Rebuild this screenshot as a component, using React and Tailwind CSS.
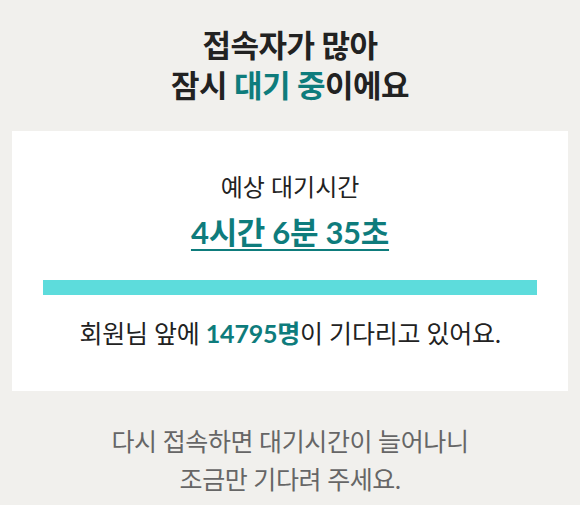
const font = { fontFamily: "Lato, 'Noto Sans CJK KR', sans-serif" };

export default function App() {
  return (
    <main
      className="w-[580px] h-[505px] bg-[#f1f0ed] flex flex-col items-center text-[#222]"
      style={font}
    >
      <h1 className="mt-[25px] text-center text-[31px] font-bold leading-[40px] tracking-[-0.5px]">
        접속자가 많아
        <br />
        잠시 <span className="text-[#0e7c7c]">대기 중</span>이에요
      </h1>

      <section className="mt-[26px] w-[556px] h-[260px] bg-white px-[31px] flex flex-col items-center">
        <p className="mt-[41px] text-[24px] leading-[30px]">예상 대기시간</p>
        <p className="mt-[11px] text-[31px] font-bold leading-[38px] tracking-[-0.3px] text-[#0e7c7c] underline underline-offset-[5px] decoration-[2px]">
          4시간 6분 35초
        </p>
        <div className="mt-[29px] w-full h-[15px] bg-[#5ddcdc]" />
        <p className="mt-[22px] text-[25px] leading-[32px] tracking-[-0.2px]">
          회원님 앞에 <span className="font-bold text-[#0e7c7c]">14795명</span>이 기다리고 있어요.
        </p>
      </section>

      <p className="mt-[31px] text-center text-[25px] leading-[38px] tracking-[-0.4px] text-[#666]">
        다시 접속하면 대기시간이 늘어나니
        <br />
        조금만 기다려 주세요.
      </p>
    </main>
  );
}
